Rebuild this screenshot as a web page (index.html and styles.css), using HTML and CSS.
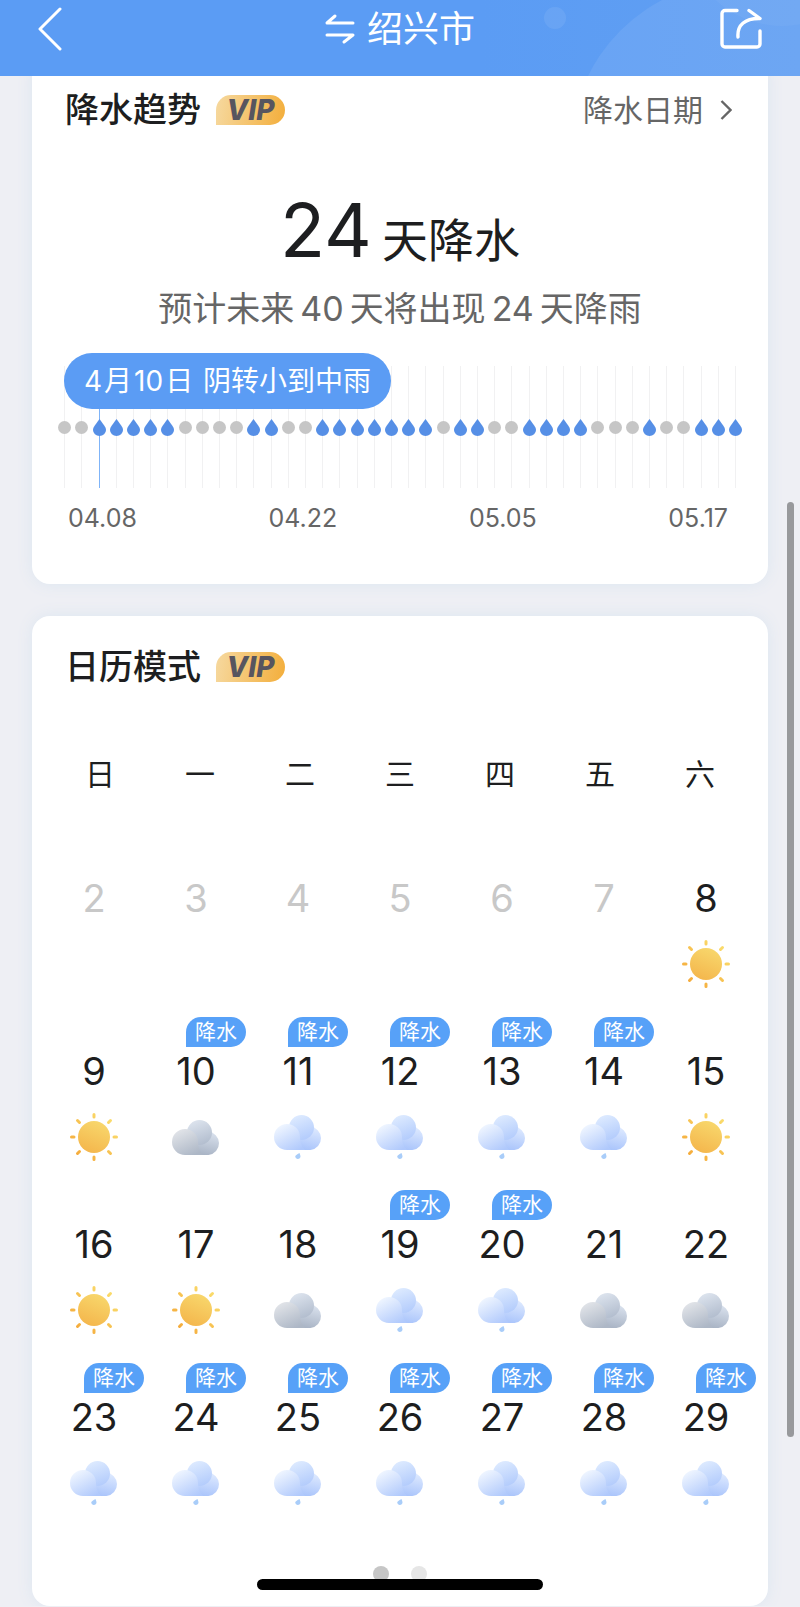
FILE: index.html
```html
<!DOCTYPE html>
<html lang="zh-CN">
<head>
    <meta charset="UTF-8">
    <meta name="viewport" content="width=device-width, initial-scale=1.0">
    <title>绍兴市</title>
    <link rel="stylesheet" href="styles.css">
</head>
<body>
    <!-- Iconos compartidos -->
    <svg class="sprite" width="0" height="0" aria-hidden="true">
        <defs>
            <linearGradient id="sunFill" x1="0.7" y1="0" x2="0.3" y2="1">
                <stop offset="0" stop-color="#f8d76c"/>
                <stop offset="1" stop-color="#f4b64c"/>
            </linearGradient>
            <linearGradient id="rayFill" gradientUnits="userSpaceOnUse" x1="42" y1="8" x2="8" y2="42">
                <stop offset="0" stop-color="#fadb6b"/>
                <stop offset="1" stop-color="#f5ac3c"/>
            </linearGradient>
            <linearGradient id="greyBase" x1="0.8" y1="0" x2="0.5" y2="1">
                <stop offset="0" stop-color="#dbe3ef"/>
                <stop offset="1" stop-color="#a8b3c4"/>
            </linearGradient>
            <linearGradient id="greyTop" x1="0.3" y1="0" x2="0.7" y2="1">
                <stop offset="0" stop-color="#dde4ee"/>
                <stop offset="1" stop-color="#b1bccd"/>
            </linearGradient>
            <linearGradient id="greyFront" x1="0.2" y1="0.1" x2="0.7" y2="1">
                <stop offset="0" stop-color="#dfe2e7"/>
                <stop offset="1" stop-color="#adb7c6"/>
            </linearGradient>
            <linearGradient id="blueBase" x1="0.8" y1="0" x2="0.5" y2="1">
                <stop offset="0" stop-color="#e0ebff"/>
                <stop offset="1" stop-color="#a9c4fb"/>
            </linearGradient>
            <linearGradient id="blueTop" x1="0.3" y1="0" x2="0.7" y2="1">
                <stop offset="0" stop-color="#deebff"/>
                <stop offset="1" stop-color="#b2cbfc"/>
            </linearGradient>
            <linearGradient id="blueFront" x1="0.2" y1="0.1" x2="0.8" y2="1">
                <stop offset="0" stop-color="#edf4ff"/>
                <stop offset="1" stop-color="#b0c9fc"/>
            </linearGradient>
        </defs>
        <symbol id="sun" viewBox="0 0 50 50">
            <circle cx="25" cy="25" r="16" fill="url(#sunFill)"/>
            <path d="M25 2.500v2.500M25 45v2.500M2.500 25h2.500M45 25h2.500M8.500 8.500l2 2M39.500 39.500l2 2M8.500 41.500l2-2M39.500 10.500l2-2" fill="none" stroke="url(#rayFill)" stroke-width="3" stroke-linecap="round"/>
        </symbol>
        <symbol id="cloudy" viewBox="0 0 50 50">
            <path d="M14 43V28h13a11.500 11.500 0 0 1 10-8.500A11.800 11.800 0 0 1 37.500 43z" fill="url(#greyBase)"/>
            <circle cx="28.500" cy="20.500" r="12.500" fill="url(#greyTop)"/>
            <path d="M14 43a13 13 0 1 1 13-13q0 8 5 13z" fill="url(#greyFront)"/>
        </symbol>
        <symbol id="rain" viewBox="0 0 50 50">
            <path d="M14 38V23h13a11.500 11.500 0 0 1 10-8.500A11.800 11.800 0 0 1 37.500 38z" fill="url(#blueBase)"/>
            <circle cx="28.500" cy="15.500" r="12.500" fill="url(#blueTop)"/>
            <path d="M14 38a13 13 0 1 1 13-13q0 8 5 13z" fill="url(#blueFront)"/>
            <path d="M26.500 41c.8 2.200 1.200 3 .9 4.200a2.700 2.700 0 0 1-5.200-.5c.1-1.300 1.600-2.100 4.300-3.700z" fill="#a9cdf9"/>
        </symbol>
        <symbol id="drop" viewBox="0 0 13 17">
            <path d="M6.500 0 11.200 6.500C12.400 8.200 13 9.500 13 11a6.500 6 0 0 1-13 0c0-1.500.6-2.800 1.800-4.500z" fill="#568fe6"/>
        </symbol>
    </svg>

    <header class="topbar">
        <svg class="topbar-bg" width="300" height="76" viewBox="500 0 300 76" aria-hidden="true">
            <circle cx="555" cy="18" r="11" fill="#fff" fill-opacity="0.08"/>
            <circle cx="740" cy="150" r="169" fill="#fff" fill-opacity="0.08"/>
            <circle cx="782" cy="-72" r="98" fill="#fff" fill-opacity="0.04"/>
        </svg>
        <button class="icon-btn" type="button" aria-label="返回">
            <svg width="24" height="44" viewBox="0 0 24 44"><path d="M22 2 2 22l20 20" fill="none" stroke="#fff" stroke-width="3" stroke-linecap="round" stroke-linejoin="round"/></svg>
        </button>
        <button class="city" type="button">
            <svg width="30" height="32" viewBox="0 0 30 32" aria-hidden="true"><path d="M28 10H2l8-7M2 22h26l-9 7" fill="none" stroke="#fff" stroke-width="3" stroke-linecap="round" stroke-linejoin="round"/></svg>
            <span>绍兴市</span>
        </button>
        <button class="icon-btn" type="button" aria-label="分享">
            <svg width="42" height="42" viewBox="0 0 42 42"><path d="M17 2.500H5a3 3 0 0 0-3 3V36a3 3 0 0 0 3 3h32a3 3 0 0 0 3-3V23M18 29C17 17 25 10.500 39 10.500M29 2.500l11 8" fill="none" stroke="#fff" stroke-width="3.400" stroke-linecap="round" stroke-linejoin="round"/></svg>
        </button>
    </header>

    <main class="page">
        <section class="card">
            <div class="card-head">
                <h2>降水趋势</h2>
                <span class="vip">VIP</span>
                <a class="more" href="#dates">降水日期
                    <svg width="12" height="22" viewBox="0 0 12 22" aria-hidden="true"><path d="M1.500 2 10.500 11l-9 9" fill="none" stroke="#666" stroke-width="2.400"/></svg>
                </a>
            </div>
            <p class="summary"><strong>24</strong><span>天降水</span></p>
            <p class="forecast">预计未来<b>40</b>天将出现<b>24</b>天降雨</p>
            <div class="chart">
                <div class="tip">4<b>月</b>10<b>日</b> 阴转小到中雨</div>
                <div class="days" id="days"></div>
            </div>
            <div class="axis" id="dates">
                <span>04.08</span>
                <span>04.22</span>
                <span>05.05</span>
                <span>05.17</span>
            </div>
        </section>

        <section class="card">
            <div class="card-head">
                <h2>日历模式</h2>
                <span class="vip">VIP</span>
            </div>
            <table class="calendar">
                <thead>
                    <tr><th>日</th><th>一</th><th>二</th><th>三</th><th>四</th><th>五</th><th>六</th></tr>
                </thead>
                <tbody id="calendar"></tbody>
            </table>
            <div class="pager">
                <button class="dot active" type="button" aria-label="第1页"></button>
                <button class="dot" type="button" aria-label="第2页"></button>
            </div>
        </section>
    </main>

    <div class="scrollbar"></div>
    <div class="home-bar"></div>

    <script>
        // 1 = lluvia, 0 = seco
        const trend = "0011111000011001111111011001111000100111";
        const selected = 2;

        document.getElementById('days').innerHTML = trend.split('').map((d, i) => {
            const mark = d === '1' ? '<svg width="13" height="17"><use href="#drop"/></svg>' : '<i></i>';
            return `<span class="day${i === selected ? ' selected' : ''}">${mark}</span>`;
        }).join('');

        // s = sol, c = nublado, r = lluvia, - = sin datos
        const icons = { s: 'sun', c: 'cloudy', r: 'rain' };
        const weather = ['------s', 'scrrrrs', 'sscrrcc', 'rrrrrrr'];
        const rainy = [10, 11, 12, 13, 14, 19, 20, 23, 24, 25, 26, 27, 28, 29];

        document.getElementById('calendar').innerHTML = weather.map((week, w) => {
            const cells = week.split('').map((code, i) => {
                const date = 2 + w * 7 + i;
                const tag = rainy.includes(date) ? '<span class="tag">降水</span>' : '';
                const icon = icons[code] ? `<svg width="50" height="50"><use href="#${icons[code]}"/></svg>` : '';
                return `<td class="${code === '-' ? 'past' : ''}">${tag}<span class="num">${date}</span>${icon}</td>`;
            }).join('');
            return `<tr>${cells}</tr>`;
        }).join('');
    </script>
</body>
</html>
```

FILE: styles.css
```css
* {
    box-sizing: border-box;
}
body {
    margin: 0;
    font-family: Inter, "Noto Sans CJK SC", sans-serif;
    background-color: #eeeff4;
    color: #1d1e20;
}
h2, p {
    margin: 0;
}
button {
    padding: 0;
    border: none;
    background: none;
    font-family: inherit;
    cursor: pointer;
}
svg {
    display: block;
}
.sprite {
    position: absolute;
}

/* Cabecera */
.topbar {
    position: sticky;
    top: 0;
    z-index: 2;
    display: flex;
    justify-content: space-between;
    align-items: center;
    height: 76px;
    padding: 0 38px 18px;
    background: linear-gradient(90deg, #5b9cf4 60%, #619ff2);
}
.topbar-bg {
    position: absolute;
    top: 0;
    right: 0;
}
.icon-btn {
    position: relative;
    display: flex;
    width: 44px;
}
.icon-btn:last-child {
    justify-content: flex-end;
}
.city {
    position: relative;
    display: flex;
    align-items: center;
    gap: 12px;
    color: #fff;
    font-size: 36px;
    line-height: 48px;
}

/* Tarjetas */
.page {
    padding: 0 32px;
}
.card {
    padding: 27px 0 24px;
    background-color: #fff;
    border-radius: 18px;
    box-shadow: 0 0 16px #dce6f0;
}
.card:first-child {
    margin-top: -17px;
    margin-bottom: 32px;
    padding-bottom: 50px;
}
.card-head {
    display: flex;
    align-items: center;
    height: 48px;
    padding: 0 36px 0 33px;
}
h2 {
    font-size: 34px;
    font-weight: 500;
    line-height: 48px;
}
.vip {
    width: 69px;
    height: 30px;
    margin-left: 15px;
    border-radius: 16px 16px 16px 0;
    background: linear-gradient(100deg, #f6d9a0, #f3ae3b);
    color: #57555f;
    font-size: 28px;
    font-style: italic;
    font-weight: 800;
    line-height: 30px;
    text-align: center;
}
.more {
    display: flex;
    align-items: center;
    gap: 17px;
    margin-left: auto;
    color: #666;
    font-size: 30px;
    line-height: 48px;
    text-decoration: none;
}

/* Tendencia */
.summary {
    display: flex;
    justify-content: center;
    align-items: baseline;
    gap: 10px;
    margin-top: 51px;
}
.summary strong {
    font-size: 74px;
    font-weight: 400;
    line-height: 90px;
}
.summary span {
    font-size: 46px;
    line-height: 60px;
}
.forecast {
    margin-top: 14px;
    color: #666;
    font-size: 34px;
    line-height: 40px;
    text-align: center;
}
.forecast b {
    margin: 0 6px;
    font-weight: 400;
}
.chart {
    position: relative;
    margin-top: 24px;
    padding: 13px 24px 0;
}
.tip {
    position: absolute;
    top: 0;
    left: 32px;
    padding: 0 20px;
    border-radius: 28px;
    background-color: #5b9cf4;
    color: #fff;
    font-size: 28px;
    line-height: 56px;
    white-space: nowrap;
}
.tip b {
    margin: 0 2px;
    font-weight: 400;
}
.days {
    display: flex;
    height: 122px;
}
.day {
    display: flex;
    flex: 1;
    justify-content: center;
    align-items: center;
    background: linear-gradient(#f1f1f2, #f1f1f2) center / 1px 100% no-repeat;
}
.day.selected {
    background-image: linear-gradient(#7fb4f8, #7fb4f8);
}
.day svg {
    flex: none;
}
.day i {
    flex: none;
    width: 13px;
    height: 13px;
    border-radius: 50%;
    background-color: #c6c6c6;
}
.axis {
    display: flex;
    justify-content: space-between;
    margin-top: 14px;
    padding: 0 40px 0 36px;
    color: #666;
    font-size: 25px;
    line-height: 32px;
}

/* Calendario */
.calendar, .calendar thead, .calendar tbody {
    display: block;
}
.calendar tr {
    display: grid;
    grid-template-columns: repeat(7, 1fr);
    padding: 0 11px;
}
.calendar thead tr {
    padding: 59px 18px 46px;
}
.calendar th {
    padding: 0;
    font-size: 30px;
    font-weight: 400;
    line-height: 48px;
}
.calendar td {
    position: relative;
    display: flex;
    flex-direction: column;
    align-items: center;
    gap: 21px;
    height: 173px;
    padding: 34px 0 0;
}
.num {
    font-size: 38px;
    line-height: 40px;
}
.past .num {
    color: #c8c8c8;
}
.tag {
    position: absolute;
    top: 0;
    left: 50%;
    width: 60px;
    height: 30px;
    margin-left: -10px;
    border-radius: 15px 15px 15px 0;
    background-color: #57a1f8;
    color: #fff;
    font-size: 21px;
    line-height: 30px;
    text-align: center;
}
.pager {
    display: flex;
    justify-content: center;
    gap: 22px;
    margin-top: 30px;
}
.dot {
    width: 16px;
    height: 16px;
    border-radius: 50%;
    background-color: #e6e6e6;
}
.dot.active {
    background-color: #c6c6c6;
}

.scrollbar {
    position: fixed;
    top: 502px;
    right: 6px;
    width: 7px;
    height: 935px;
    border-radius: 4px;
    background-color: #98999c;
}
.home-bar {
    position: fixed;
    bottom: 17px;
    left: 50%;
    width: 286px;
    height: 11px;
    margin-left: -143px;
    border-radius: 6px;
    background-color: #000;
}
```
